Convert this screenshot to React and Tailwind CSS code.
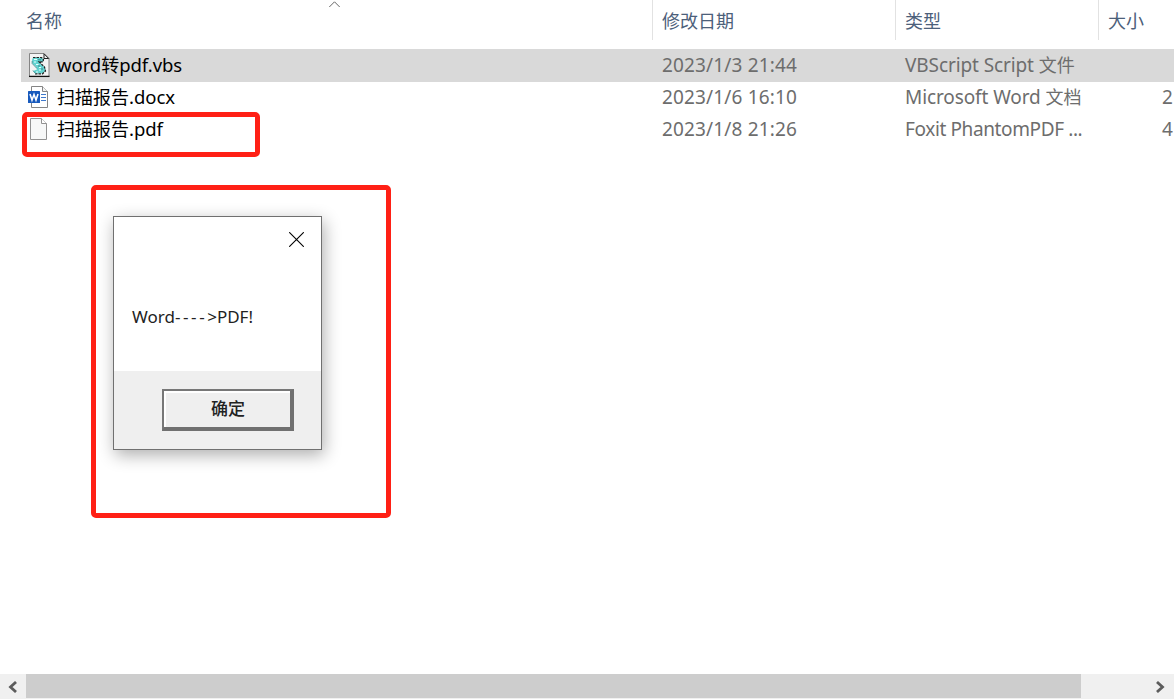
import React, { useState } from 'react';
import { clsx } from 'clsx';

const FILES = [
  { id: 1, name: ['word', '转', 'pdf.vbs'], date: '2023/1/3 21:44', type: ['VBScript Script ', '文件'], typeTracking: 'tracking-[-0.1px]', size: '', icon: 'script' },
  { id: 2, name: ['', '扫描报告', '.docx'], date: '2023/1/6 16:10', type: ['Microsoft Word ', '文档'], typeTracking: 'tracking-[-0.1px]', size: '2', icon: 'word' },
  { id: 3, name: ['', '扫描报告', '.pdf'], date: '2023/1/8 21:26', type: ['Foxit PhantomPDF ...', ''], typeTracking: 'tracking-[-0.38px]', size: '4', icon: 'blank' },
];

function ScriptIcon() {
  return (
    <svg className="-mt-px" width="22" height="25" viewBox="0 0 22 25" fill="none">
      <path d="M1.5 0.5H16L21 5.5V23.5H1.5Z" fill="#f4f4f4" stroke="#858585" />
      <path d="M1 23.4H21.5" stroke="#111" strokeWidth="1.3" />
      <path d="M16 0.8V5.5H20.7Z" fill="#eee" stroke="#222" />
      <path d="M5 4.5H13.5L15.5 6.5L15 9H11L13 11L17 14.5L17.5 18L14.5 20.5H7.5L5 18L9 16.5L8 13.5L4.5 10.5L4 7Z" fill="#62d3d0" />
      <path d="M5 4.5H13.5L15.5 6.5L15 8.8H11L16.5 14L17.5 18L14.5 20.8H7" stroke="#222" strokeWidth="1.2" strokeDasharray="2.5 1" />
      <path d="M4.2 8V10.5L9 15.5M5 17.5L7.5 20.5" stroke="#4a9698" />
      <path d="M6 6.5H9M6 9H8M8 11.5H10.5M11 14.5H13M11 17H13M8 19H10" stroke="#e4ffff" />
      <path d="M10 6.8H13M10 13H12M13 16H15" stroke="#398488" />
    </svg>
  );
}

function WordIcon() {
  return (
    <svg width="22" height="24" viewBox="0 0 22 24" fill="none">
      <path d="M3.5 0.5H14.5L19.5 5.5V21.5H3.5Z" fill="#fff" stroke="#858585" />
      <path d="M14.5 0.5V5.5H19.5" fill="#f4f4f4" stroke="#858585" />
      <path d="M13 8.5H18M13 11.5H18M13 14.5H18" stroke="#3f79cc" strokeWidth="1.2" />
      <rect y="5" width="12" height="12" rx="0.5" fill="#185abd" />
      <path d="M2 8L4 14L6 8.5L8 14L10 8" stroke="#fff" strokeWidth="1.6" />
    </svg>
  );
}

function BlankIcon() {
  return (
    <svg width="22" height="24" viewBox="0 0 22 24" fill="none">
      <path d="M2.5 0.5H13.5L18.5 5.5V21.5H2.5Z" fill="#f7f8f8" stroke="#929292" />
      <path d="M13.5 0.5V5.5H18.5" fill="#fff" stroke="#929292" />
    </svg>
  );
}

const ICONS = { script: ScriptIcon, word: WordIcon, blank: BlankIcon };

function Latin({ className, children }) {
  return <span className={clsx("font-['Noto_Sans','Noto_Sans_CJK_SC',sans-serif]", className)}>{children}</span>;
}

function HeaderCell({ className, children }) {
  return (
    <div className={clsx('h-10 shrink-0 text-lg leading-[41px] text-[#4c607a]', className)}>{children}</div>
  );
}

function FileRow({ file, selected, onSelect }) {
  const Icon = ICONS[file.icon];
  return (
    <div
      onClick={onSelect}
      className={clsx('flex shrink-0 text-lg leading-[31px] whitespace-pre text-[#6d6d6d]', selected ? '-mb-px h-[33px] bg-[#d9d9d9]' : 'h-8')}
    >
      <div className="flex w-[641px] shrink-0 pl-[7px] text-black">
        <span className="w-[29px] shrink-0 pt-[5px]"><Icon /></span>
        <Latin className="text-[18.5px] tracking-[-0.05px]">{file.name[0]}</Latin>
        <span>{file.name[1]}</span>
        <Latin className="text-[18.5px] tracking-[-0.05px]">{file.name[2]}</Latin>
      </div>
      <div className="flex w-[243px] shrink-0"><Latin className="pt-px text-[19px] tracking-[0.15px]">{file.date}</Latin></div>
      <div className="flex w-[257px] shrink-0">
        <Latin className={clsx('pt-px text-[19px]', file.typeTracking)}>{file.type[0]}</Latin>
        <span>{file.type[1]}</span>
      </div>
      <div className="flex shrink-0"><Latin className="pt-px text-[19px]">{file.size}</Latin></div>
    </div>
  );
}

function MessageBox() {
  return (
    <div className="flex h-[234px] w-[209px] flex-col border border-[#707070] bg-white shadow-[2px_5px_16px_rgba(0,0,0,0.32)]">
      <div className="flex h-[154px] flex-col">
        <button className="mt-[15px] mr-[17px] self-end">
          <svg width="15" height="15" viewBox="0 0 15 15" fill="none">
            <path d="M0.2 0.2L14.8 14.8M14.8 0.2L0.2 14.8" stroke="#000" strokeWidth="1.1" />
          </svg>
        </button>
        <p className="mt-[57px] pl-[18px] text-[17px] leading-6 text-[#222]">
          <Latin>Word<span className="tracking-[2.6px]">----</span>&gt;PDF!</Latin>
        </p>
      </div>
      <div className="flex grow bg-[#efefef] pt-[18px] pl-12">
        <button className="h-[42px] w-[132px] border-2 border-t-[#777] border-r-4 border-b-4 border-l-[#777] border-r-[#707070] border-b-[#707070] pb-[3px] pl-0.5 text-[17px] leading-none font-medium text-[#222] shadow-[inset_2px_2px_0_#fff]">
          确定
        </button>
      </div>
    </div>
  );
}

function ScrollBar() {
  return (
    <div className="flex h-[25px] shrink-0 bg-[#f0f0f0] pb-px">
      <button className="flex w-[26px] items-center pt-px pl-[7px]">
        <svg width="10" height="12" viewBox="0 0 10 12" fill="none">
          <path d="M9 1L3.5 6L9 11" stroke="#5c5c5c" strokeWidth="2.8" />
        </svg>
      </button>
      <div className="w-[1055px] bg-[#cdcdcd]" />
      <button className="ml-auto flex w-[26px] items-center pt-px pl-2">
        <svg width="10" height="12" viewBox="0 0 10 12" fill="none">
          <path d="M1 1L6.5 6L1 11" stroke="#5c5c5c" strokeWidth="2.8" />
        </svg>
      </button>
    </div>
  );
}

export default function App() {
  const [selectedId, setSelectedId] = useState(1);

  return (
    <div className="relative flex h-screen w-full flex-col overflow-hidden bg-white font-['Noto_Sans_CJK_SC',sans-serif]">
      <div className="flex h-[49px] shrink-0">
        <HeaderCell className="flex w-[652px] pl-[26px]">
          <span className="w-[303px]">名称</span>
          <svg className="mt-px" width="11" height="7" viewBox="0 0 11 7" fill="none">
            <path d="M0.3 6L5.5 0.8L10.7 6" stroke="#666" />
          </svg>
        </HeaderCell>
        <HeaderCell className="w-[243px] border-l border-[#e2e2e2] pl-[9px]">修改日期</HeaderCell>
        <HeaderCell className="w-[203px] border-l border-[#e2e2e2] pl-[9px]">类型</HeaderCell>
        <HeaderCell className="w-[76px] border-l border-[#e2e2e2] pl-[9px]">大小</HeaderCell>
      </div>

      <div className="flex grow flex-col pl-[21px]">
        {FILES.map((file) => (
          <FileRow key={file.id} file={file} selected={file.id === selectedId} onSelect={() => setSelectedId(file.id)} />
        ))}
      </div>

      <ScrollBar />

      {/* Markers over the list */}
      <div className="pointer-events-none absolute top-28 left-[22px] h-[45px] w-[238px] rounded-[5px] border-5 border-[#ff2015]" />
      <div className="absolute top-[185px] left-[91px] h-[333px] w-[300px] rounded-[5px] border-5 border-[#ff2015] pt-[26px] pl-[17px]">
        <MessageBox />
      </div>
    </div>
  );
}
